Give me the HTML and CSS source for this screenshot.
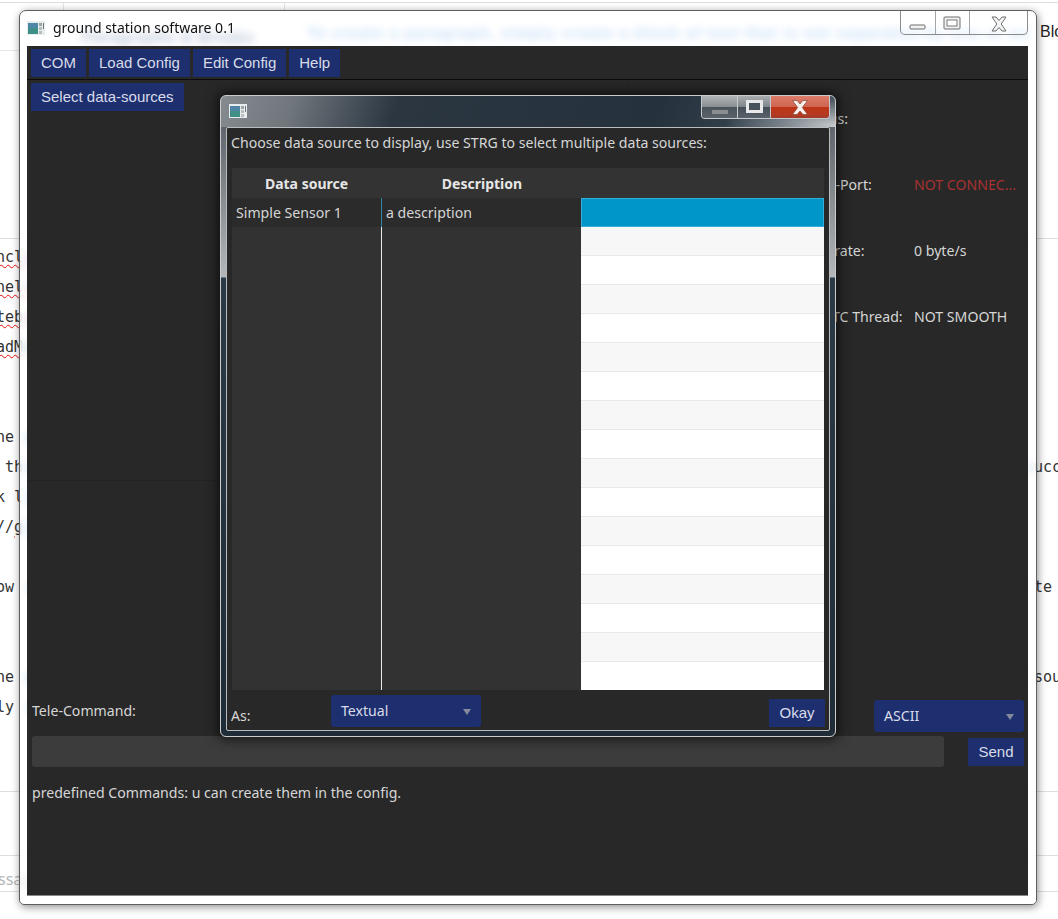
FILE: index.html
```html
<!DOCTYPE html>
<html lang="en">
<head>
<meta charset="utf-8">
<title>ground station software 0.1</title>
<link rel="stylesheet" href="styles.css">
</head>
<body>
<div class="desktop">
  <div class="editor">
    <div class="ed-top"><i class="tick tick-a"></i><i class="tick tick-b"></i></div>
    <div class="ed-head">
      <span class="ed-h">Paragraphs &amp; Breaks</span>
      <span class="ed-blue-line">To create a paragraph, simply create a block of text that is not separated by one or more blank lines.</span>
      <span class="ed-blo">Block</span>
    </div>
    <div class="ed-rule"></div>
    <div class="ed-gap"></div>
    <div class="ed-rows">
      <div class="ed-row"><span class="frag wavy">ncl<b class="pink">ass</b></span></div>
      <div class="ed-row"><span class="frag wavy">nel<b class="pink">ass</b></span></div>
      <div class="ed-row"><span class="frag wavy">teb<b class="pink">ass</b></span></div>
      <div class="ed-row"><span class="frag wavy">adM<b class="blue">ore</b></span></div>
      <div class="ed-row"></div>
      <div class="ed-row"></div>
      <div class="ed-row"><span class="frag">ne <b class="blue">ab</b></span></div>
      <div class="ed-row"><span class="frag"> th<b class="blue">is</b></span><span class="frag-r"><b class="blue">s</b>ucc</span></div>
      <div class="ed-row"><span class="frag">k l<b class="blue">in</b></span></div>
      <div class="ed-row"><span class="frag">//<u class="wavy-one">g</u><b class="blue">it</b></span></div>
      <div class="ed-row"></div>
      <div class="ed-row"><span class="frag">ow <b class="blue">it</b></span><span class="frag-r"><b class="blue"> </b>te</span></div>
      <div class="ed-row"></div>
      <div class="ed-row"></div>
      <div class="ed-row"><span class="frag">ne <b class="blue">ab</b></span><span class="frag-r"><b class="blue"> </b>sou</span></div>
      <div class="ed-row"><span class="frag">ly <b class="blue">it</b></span></div>
    </div>
    <div class="ed-block ed-block-a"></div>
    <div class="ed-block ed-block-b"></div>
    <div class="ed-msg">ssage</div>
  </div>

  <section class="window">
    <header class="win-title">
      <svg class="app-icon" viewBox="0 0 18 14" aria-hidden="true">
        <rect x="0" y="0" width="18" height="14" fill="#e8ecec"/>
        <rect x="1" y="2" width="10" height="11" fill="#3f8f86"/>
        <rect x="1" y="2" width="10" height="5" fill="#4f86a6"/>
        <rect x="12" y="2" width="3" height="3" fill="#9aa5a5"/>
        <rect x="12" y="6" width="3" height="3" fill="#b5bdbd"/>
        <rect x="12" y="10" width="3" height="3" fill="#b5bdbd"/>
        <rect x="16" y="2" width="1" height="6" fill="#6b7b7b"/>
      </svg>
      <span class="win-name">ground station software 0.1</span>
      <div class="controls">
        <div class="ctl ctl-min"><svg width="18" height="7" viewBox="0 0 18 7" aria-hidden="true"><rect x="1" y="1" width="15" height="4" rx="1" fill="#f2f2f2" stroke="#6c6c6c"/></svg></div>
        <div class="ctl ctl-max"><svg width="19" height="14" viewBox="0 0 19 14" aria-hidden="true"><rect x="1" y="1" width="16" height="12" rx="1" fill="#f2f2f2" stroke="#6c6c6c"/><rect x="4" y="4" width="10" height="6" fill="#fff" stroke="#7a7a7a"/></svg></div>
        <div class="ctl ctl-close"><svg width="18" height="16" viewBox="0 0 18 16" aria-hidden="true"><path d="M2 1h4l3 3.500L12 1h4l-4.800 7 4.800 7h-4l-3-3.500L6 15H2l4.800-7z" fill="#f4f4f4" stroke="#6c6c6c"/></svg></div>
      </div>
    </header>

    <div class="client">
      <nav class="menu">
        <button class="btn">COM</button>
        <button class="btn">Load Config</button>
        <button class="btn">Edit Config</button>
        <button class="btn">Help</button>
      </nav>
      <div class="main">
        <div class="left">
          <div class="left-top"><button class="btn">Select data-sources</button></div>
        </div>
        <div class="status">
          <span class="lbl">Status:</span><span class="val"></span>
          <span class="lbl">COM-Port:</span><span class="val val-red">NOT CONNEC...</span>
          <span class="lbl">Datarate:</span><span class="val">0 byte/s</span>
          <span class="lbl">GUI TC Thread:</span><span class="val">NOT SMOOTH</span>
        </div>
      </div>
      <div class="command">
        <div class="cmd-top">
          <span class="lbl">Tele-Command:</span>
          <div class="combo combo-ascii"><span>ASCII</span><i class="arrow"></i></div>
        </div>
        <div class="cmd-input">
          <div class="input"></div>
          <button class="btn btn-send">Send</button>
        </div>
        <p class="lbl predefined">predefined Commands: u can create them in the config.</p>
      </div>
    </div>
  </section>

  <section class="dialog">
    <header class="dlg-title">
      <svg class="app-icon dlg-icon" viewBox="0 0 18 14" aria-hidden="true">
        <rect x="0" y="0" width="18" height="14" fill="#e8ecec"/>
        <rect x="1" y="2" width="10" height="11" fill="#3f8f86"/>
        <rect x="1" y="2" width="10" height="5" fill="#4f86a6"/>
        <rect x="12" y="2" width="3" height="3" fill="#9aa5a5"/>
        <rect x="12" y="6" width="3" height="3" fill="#b5bdbd"/>
        <rect x="12" y="10" width="3" height="3" fill="#b5bdbd"/>
        <rect x="16" y="2" width="1" height="6" fill="#6b7b7b"/>
      </svg>
      <div class="dlg-controls">
        <div class="dctl dctl-min"><i class="dmin-bar"></i></div>
        <div class="dctl dctl-max"><i class="dmax-box"></i></div>
        <div class="dctl dctl-close"><svg width="18" height="15" viewBox="0 0 18 15" aria-hidden="true"><path d="M1.500 0.500h4.500l3 3.500 3-3.500h4.500l-5.200 7 5.200 7h-4.500l-3-3.500-3 3.500H1.500l5.200-7z" fill="#f6f1ee" stroke="#7d3525" stroke-width=".6"/></svg></div>
      </div>
    </header>
    <div class="dlg-client">
      <p class="lbl dlg-prompt">Choose data source to display, use STRG to select multiple data sources:</p>
      <div class="table">
        <div class="th">Data source</div>
        <div class="th th-desc">Description</div>
        <div class="th"></div>
        <div class="td">Simple Sensor 1</div>
        <div class="td td-line">a description</div>
        <div class="td-sel"></div>
        <div class="fill"></div>
        <div class="fill fill-line"></div>
        <div class="rows"></div>
      </div>
      <div class="dlg-foot">
        <span class="lbl as-label">As:</span>
        <div class="combo combo-type"><span>Textual</span><i class="arrow"></i></div>
        <button class="btn btn-okay">Okay</button>
      </div>
    </div>
  </section>
</div>
</body>
</html>
```

FILE: styles.css
```css
* { box-sizing: border-box; }
html, body { margin: 0; padding: 0; }
body { width: 1058px; height: 919px; overflow: hidden; background: #fff; }
.desktop { position: relative; width: 1058px; height: 919px; overflow: hidden; font-family: "Noto Sans", "Open Sans", sans-serif; }

/* page behind the windows */
.editor { display: flex; flex-direction: column; width: 1058px; height: 919px; }
.ed-top { position: relative; height: 3px; border-bottom: 1px solid #dedede; }
.tick { position: absolute; top: 3px; width: 1px; height: 7px; background: #e4e4e4; }
.tick-a { left: 63px; }
.tick-b { left: 284px; }
.ed-head { display: grid; grid-template-columns: 82px 225px 733px 1fr; height: 47px; align-items: center; white-space: nowrap; overflow: hidden; padding-top: 11px; }
.ed-h { grid-column: 2; margin-top: 12px; font: bold 17px "Liberation Sans", sans-serif; color: #123a78; }
.ed-blue-line { grid-column: 3; width: 722px; font: bold 15px "Liberation Sans", sans-serif; letter-spacing: 1.300px; color: #1f7fe0; overflow: hidden; }
.ed-blo { grid-column: 4; font: 16px "Liberation Sans", sans-serif; color: #222; }
.ed-rule { width: 40px; height: 1px; background: #e6e6e6; }
.ed-gap { height: 188px; border-bottom: 1px solid #dedede; }
.ed-rows { margin-top: 3px; font: 15px "DejaVu Sans Mono", monospace; color: #333; }
.ed-row { display: flex; height: 30px; align-items: center; white-space: pre; }
.frag { margin-left: -4px; }
.frag b, .frag-r b { font-weight: normal; }
.frag-r { margin-left: auto; width: 33px; overflow: hidden; }
.wavy { text-decoration: underline wavy #e81010 1px; text-underline-offset: 2px; }
.wavy-one { text-decoration: underline wavy #e81010 1px; text-underline-offset: 2px; }
.pink { color: #b070d0; }
.blue { color: #1a7fe0; }
.ed-block { border-bottom: 1px solid #dedede; }
.ed-block-a { height: 70px; }
.ed-block-b { height: 64px; }
.ed-msg { height: 36px; border-bottom: 1px solid #dedede; font-size: 16px; line-height: 46px; color: #b4b8ba; margin-left: -2px; }

/* main window */
.window { position: absolute; left: 19px; top: 10px; width: 1018px; height: 895px; display: flex; flex-direction: column; padding: 0 8px 8px 7px; border: 1px solid #5e5e5e; border-radius: 7px 7px 5px 5px; background: rgba(255, 255, 255, .72); backdrop-filter: blur(4px); box-shadow: 1px 2px 8px rgba(0, 0, 0, .45); }
.win-title { display: flex; height: 35px; flex: none; }
.app-icon { width: 18px; height: 14px; flex: none; margin-top: 10px; }
.win-name { margin: 7px 0 0 8px; font-size: 14px; line-height: 20px; color: #111; }
.controls { display: flex; margin-left: auto; height: 24px; border: 1px solid #8b8b8b; border-top: 0; border-radius: 0 0 5px 5px; background: rgba(255, 255, 255, .3); }
.ctl { display: flex; justify-content: center; height: 100%; }
.ctl-min { width: 35px; align-items: flex-end; padding-bottom: 3px; border-right: 1px solid #a5a5a5; }
.ctl-max { width: 34px; align-items: flex-start; padding-top: 5px; border-right: 1px solid #a5a5a5; }
.ctl-close { width: 57px; align-items: flex-start; padding-top: 5px; }
.client { flex: 1; display: flex; flex-direction: column; min-height: 0; background: #282828; border-bottom: 1px solid #888; }

.btn { display: block; height: 28px; padding: 0 10px; border: 0; background: #1d2f6f; color: #d9dce8; font: 15px/28px "Liberation Sans", Arial, sans-serif; white-space: nowrap; }
.menu { display: flex; gap: 3px; height: 34px; flex: none; padding: 3px 4px 0; border-bottom: 1px solid #0c0c0c; }
.main { display: grid; grid-template-columns: 601px 1fr; height: 610px; flex: none; }
.left-top { height: 401px; padding: 3px 4px; border-bottom: 1px solid #232323; }
.left { border-right: 1px solid #252525; }
.lbl { font-size: 14.120px; line-height: 18px; color: #d6d6d6; }
.status { display: grid; grid-template-columns: 111px 1fr; grid-auto-rows: 66px; padding: 6px 0 0 175px; align-items: center; white-space: nowrap; }
.val { font-size: 14.120px; line-height: 18px; color: #d6d6d6; }
.val-red { color: #a73333; }

.command { flex: 1; padding: 0 4px 0 5px; }
.cmd-top { display: flex; justify-content: space-between; height: 46px; padding-top: 10px; }
.cmd-top .lbl { padding-top: 2px; }
.combo { display: flex; align-items: center; justify-content: space-between; width: 150px; height: 32px; padding: 0 10px 2px; border-radius: 3px; background: #1d2f6f; color: #d9dce8; font-size: 14.120px; }
.arrow { width: 0; height: 0; border-left: 4.500px solid transparent; border-right: 4.500px solid transparent; border-top: 6px solid #84899b; margin-top: 4px; }
.cmd-input { display: flex; justify-content: space-between; align-items: flex-start; height: 31px; }
.input { width: 912px; height: 31px; border-radius: 3px; background: #3c3c3c; }
.btn-send { width: 56px; margin-top: 2px; padding: 0; text-align: center; }
.predefined { margin: 17px 0 0; }

/* dialog */
.dialog { position: absolute; left: 220px; top: 95px; width: 616px; height: 642px; display: flex; flex-direction: column; padding: 0 5px 5px; border: 1px solid #c9cdd0; border-radius: 6px; box-shadow: 0 0 12px 3px rgba(0, 0, 0, .6);
  background:
    linear-gradient(to bottom, transparent 31px, #5f656b 31px, #b4b7ba 181px, #2b3a47 182px, #1f2c38 100%),
    radial-gradient(110px 34px at 100% 30px, rgba(205, 210, 214, .95), transparent),
    linear-gradient(108deg, #868b90 0, #6f767c 70px, #2b3641 170px, #25313c 420px, #33414d 500px, #2a3642 560px); }
.dlg-title { display: flex; height: 31px; flex: none; }
.dlg-icon { margin: 8px 0 0 3px; }
.dlg-controls { display: flex; margin-left: auto; height: 23px; border: 1px solid #c6c9cc; border-top: 0; border-radius: 0 0 4px 4px; overflow: hidden; }
.dctl { display: flex; justify-content: center; align-items: center; height: 100%; }
.dctl-min { width: 36px; padding-top: 9px; border-right: 1px solid #c6c9cc; background: linear-gradient(#b0b3b5 0, #898e92 50%, #4c545b 52%, #5b646b 100%); }
.dctl-max { width: 33px; border-right: 1px solid #c6c9cc; background: linear-gradient(#a9adb0 0, #7e858a 50%, #464f57 52%, #59626a 100%); }
.dctl-close { width: 58px; background: linear-gradient(#dc7c6a 0, #cf6650 48%, #bf3417 52%, #b53a22 85%, #9e3a2a 100%); }
.dmin-bar { width: 16px; height: 4px; background: #8a8e92; }
.dmax-box { width: 17px; height: 13px; border: 3px solid #e8e8e8; background: #48525a; margin-top: -1px; }
.dlg-client { flex: 1; display: flex; flex-direction: column; min-height: 0; padding: 0 5px; border: 1px solid #b9bdc0; border-radius: 2px; background: #282828; }
.dlg-prompt { height: 40px; margin: 0; padding-top: 5px; line-height: 20px; text-indent: -1px; white-space: nowrap; }
.table { display: grid; grid-template-columns: 149px 200px 243px; grid-template-rows: 30px 29px 1fr; height: 522px; flex: none; }
.th { display: flex; align-items: center; justify-content: center; background: #333; color: #e6e6e6; font-size: 14px; font-weight: 700; }
.th-desc { padding-left: 2px; }
.td { display: flex; align-items: center; padding-left: 4px; background: #2b2b2b; color: #d6d6d6; font-size: 14.120px; }
.td-line { border-left: 1px solid #2f87a8; }
.td-sel { background: #0096c9; border: 1px solid #35addb; }
.fill { background: #323232; }
.fill-line { border-left: 1px solid #e8e8e8; }
.rows { background: repeating-linear-gradient(to bottom, #f7f7f7 0, #f7f7f7 28px, #e9e9e9 28px, #e9e9e9 29px, #fff 29px, #fff 57px, #e9e9e9 57px, #e9e9e9 58px); }
.dlg-foot { display: flex; align-items: flex-start; flex: 1; padding-top: 5px; }
.as-label { width: 100px; margin-top: 12px; margin-left: -1px; }
.btn-okay { width: 56px; margin: 4px -1px 0 auto; padding: 0; text-align: center; }
```
